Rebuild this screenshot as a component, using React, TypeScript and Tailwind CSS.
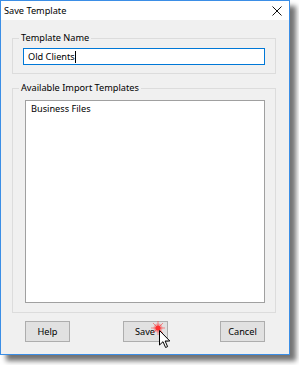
import React from 'react';

const font = { fontFamily: '"Noto Sans", "Open Sans", sans-serif' };

const WinButton: React.FC<{ label: string; children?: React.ReactNode }> = ({ label, children }) => (
  <button className="relative w-[45px] h-[21px] bg-[#e1e1e1] border border-[#adadad] text-[9.2px] leading-none text-black">
    {label}
    {children}
  </button>
);

const Cursor: React.FC = () => (
  <span className="absolute left-[35px] top-[8px] pointer-events-none">
    {/* red click star */}
    <svg width="16" height="16" viewBox="0 0 16 16" className="absolute -left-[9px] -top-[10px]">
      <circle cx="8" cy="8" r="2.6" fill="#ff1a1a" opacity="0.95" />
      <circle cx="8" cy="8" r="4.5" fill="#ff4040" opacity="0.35" />
      <path d="M8 1 L8 15 M1 8 L15 8 M3 3 L13 13 M13 3 L3 13" stroke="#ff3030" strokeWidth="0.7" opacity="0.75" />
    </svg>
    <svg width="12" height="19" viewBox="0 0 12 19" className="absolute left-0 top-0">
      <path d="M0.5 0.5 L0.5 15 L4 11.7 L6.6 17.5 L8.6 16.6 L6.1 11 L10.8 11 Z" fill="#fff" stroke="#000" strokeWidth="1" strokeLinejoin="miter" />
    </svg>
  </span>
);

export default function App() {
  return (
    <div className="w-[299px] h-[365px] bg-white" style={font}>
      <div className="w-[290px] h-[355px] flex flex-col bg-[#f0f0f0] border border-[#3b8ee6] shadow-[6px_6px_5px_rgba(0,0,0,0.55)]">
        {/* Title bar */}
        <div className="h-[19px] bg-white flex items-center justify-between pl-[3px] pr-[7px]">
          <span className="text-[9.2px] text-black">Save Template</span>
          <svg width="10" height="10" viewBox="0 0 10 10">
            <path d="M0.5 0.5 L9.5 9.5 M9.5 0.5 L0.5 9.5" stroke="#111" strokeWidth="1" />
          </svg>
        </div>

        <div className="flex flex-col pl-[11px] pr-[13px] pt-[10px]">
          <fieldset className="border border-[#dcdcdc] pl-[10px] pr-[10px] pb-[8px]">
            <legend className="ml-[-4px] px-[2px] text-[9.2px] leading-[16px] text-black">Template Name</legend>
            <div className="mt-[2px] h-[17px] bg-white border border-[#0078d7] flex items-center pl-[4px] text-[9.2px] text-black">
              Old Clients<span className="w-px h-[12px] bg-black" />
            </div>
          </fieldset>

          <fieldset className="mt-[6px] border border-[#dcdcdc] pl-[12px] pr-[10px] pb-[9px]">
            <legend className="ml-[-6px] px-[2px] text-[9.2px] leading-[16px] text-black">Available Import Templates</legend>
            <div className="mt-[4px] h-[203px] bg-white border border-[#a0a0a0] pl-[5px] pt-[1px] text-[9.2px] text-black">
              Business Files
            </div>
          </fieldset>

          <div className="mt-[8px] flex justify-between pl-[13px] pr-[11px]">
            <WinButton label="Help" />
            <WinButton label="Save">
              <Cursor />
            </WinButton>
            <WinButton label="Cancel" />
          </div>
        </div>
      </div>
    </div>
  );
}
